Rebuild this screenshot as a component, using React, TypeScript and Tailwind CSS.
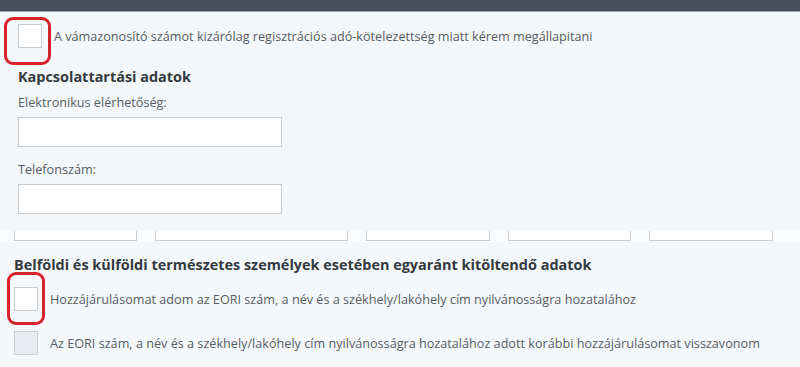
import React from 'react';

const FONT = "font-['Open_Sans',_'Noto_Sans',_sans-serif]";

function Box({ disabled, marked }: { disabled?: boolean; marked?: 'top' | 'bottom' }) {
  return (
    <div className="relative shrink-0">
      <div
        className={
          'w-[24px] h-[24px] border border-[#c9ced4] ' +
          (disabled ? 'bg-[#e8ecf0]' : 'bg-white')
        }
      />
      {marked === 'top' && (
        <div className="absolute left-[-14px] top-[-7px] w-[47px] h-[48px] rounded-[9px] border-[3px] border-[#d9212b]" />
      )}
      {marked === 'bottom' && (
        <div className="absolute left-[-7px] top-[-15px] w-[38px] h-[53px] rounded-[9px] border-[3px] border-[#d9212b]" />
      )}
    </div>
  );
}

function Field({ label }: { label: string }) {
  return (
    <div className="flex flex-col">
      <span className="text-[12.65px] leading-[18px] text-[#575c63]">{label}</span>
      <div className="mt-[6px] w-[264px] h-[30px] bg-white border border-[#c6cbd1]" />
    </div>
  );
}

const CUT_BOXES = ['w-[123px]', 'w-[193px]', 'w-[124px]', 'w-[123px]', 'w-[124px]'];

export default function App() {
  return (
    <div className={`w-[800px] h-[367px] overflow-hidden bg-[#f5f8fb] ${FONT}`}>
      <div className="h-[12px] bg-[#4a4f5c] border-b border-[#9aa0a8]" />

      <div className="pl-[18px]">
        <div className="flex items-center gap-[12px] mt-[12px]">
          <Box marked="top" />
          <span className="text-[12.65px] text-[#575c63]">
            A vámazonosító számot kizárólag regisztrációs adó-kötelezettség miatt kérem megállapitani
          </span>
        </div>

        <h3 className="mt-[19px] text-[14.45px] leading-[20px] font-bold text-[#343a40]">Kapcsolattartási adatok</h3>

        <div className="mt-[6px] flex flex-col gap-[13px]">
          <Field label="Elektronikus elérhetőség:" />
          <Field label="Telefonszám:" />
        </div>
      </div>

      <div className="mt-[17px] h-[11px] bg-[#fbfcfd] flex pl-[14px] gap-[18px]">
        {CUT_BOXES.map((w, i) => (
          <div key={i} className={`${w} h-[10px] bg-white border border-t-0 border-[#c8cdd3]`} />
        ))}
      </div>

      <div className="pl-[14px]">
        <h3 className="mt-[13px] text-[14.45px] leading-[20px] font-bold text-[#343a40]">
          Belföldi és külföldi természetes személyek esetében egyaránt kitöltendő adatok
        </h3>

        <div className="mt-[12px] flex flex-col gap-[20px]">
          <div className="flex items-center gap-[12px]">
            <Box marked="bottom" />
            <span className="text-[12.65px] text-[#575c63]">
              Hozzájárulásomat adom az EORI szám, a név és a székhely/lakóhely cím nyilvánosságra hozatalához
            </span>
          </div>
          <div className="flex items-center gap-[12px]">
            <Box disabled />
            <span className="text-[12.65px] text-[#575c63]">
              Az EORI szám, a név és a székhely/lakóhely cím nyilvánosságra hozatalához adott korábbi hozzájárulásomat visszavonom
            </span>
          </div>
        </div>
      </div>
    </div>
  );
}
